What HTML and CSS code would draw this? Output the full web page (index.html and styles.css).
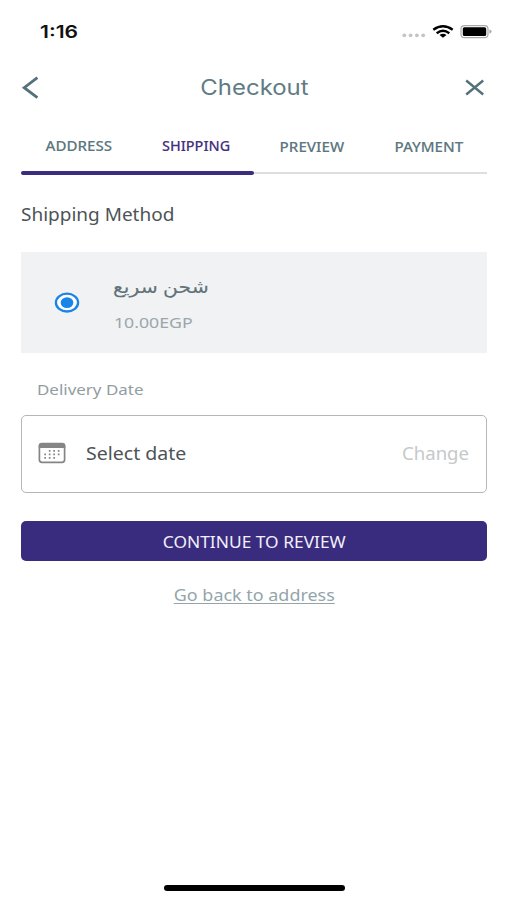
FILE: index.html
```html
<!DOCTYPE html>
<html lang="en">
<head>
<meta charset="utf-8">
<title>Checkout</title>
<link rel="stylesheet" href="styles.css">
</head>
<body>
<div class="screen">
  <div class="status">
    <span class="time wide">1:16</span>
    <svg class="status-icons" width="90" height="16" viewBox="0 0 90 16">
      <g fill="#c4c4c4"><circle cx="2.3" cy="10.3" r="1.9"/><circle cx="8.6" cy="10.3" r="1.9"/><circle cx="14.9" cy="10.3" r="1.9"/><circle cx="21.2" cy="10.3" r="1.9"/></g>
      <g fill="none" stroke="#000" stroke-width="2.4"><path d="M31.3 4.8Q41-2.2 50.7 4.8"/><path d="M34.7 8.2Q41 3.4 47.3 8.2"/></g>
      <path d="M37.5 9.9Q41 7.4 44.5 9.9L41 12.8Z"/>
      <rect x="59" y=".6" width="27" height="12" rx="3.4" fill="#fff" stroke="#aaa" stroke-width="1.2"/>
      <rect x="60.8" y="2.2" width="23.4" height="8.8" rx="1.6"/>
      <path d="M87.4 4.4Q89.6 5 89.6 6.6T87.4 8.8Z" fill="#aaa"/>
    </svg>
  </div>
  <header class="header">
    <svg class="chevron" width="18" height="24" viewBox="0 0 18 24" fill="none" stroke="#54717b" stroke-width="2.8"><path d="M16.4 1.7L3.2 11.7L16.4 21.7"/></svg>
    <h1 class="title wide">Checkout</h1>
    <svg class="close" width="20" height="18" viewBox="0 0 20 18" fill="none" stroke="#54717b" stroke-width="2.4"><path d="M1.2 1.5L18.2 15.5M18.2 1.5L1.2 15.5"/></svg>
  </header>
  <nav class="tabs">
    <span class="tab"><span class="wide t1">ADDRESS</span></span>
    <span class="tab active"><span class="wide t2">SHIPPING</span></span>
    <span class="tab low"><span class="wide t1">PREVIEW</span></span>
    <span class="tab low"><span class="wide t1">PAYMENT</span></span>
  </nav>
  <div class="track"><div class="progress"></div></div>
  <h2 class="section"><span class="wide left">Shipping Method</span></h2>
  <div class="method">
    <svg class="radio" width="26" height="22" viewBox="0 0 26 22"><ellipse cx="13" cy="11.6" rx="11.1" ry="8.9" fill="#fff" stroke="#1b84e7" stroke-width="2.3"/><ellipse cx="13" cy="11.6" rx="6.3" ry="5.4" fill="#1b84e7"/></svg>
    <div class="method-text">
      <div class="method-name" lang="ar"><span class="wide left">شحن سريع</span></div>
      <div class="price"><span class="wide left">10.00EGP</span></div>
    </div>
  </div>
  <div class="label"><span class="wide left">Delivery Date</span></div>
  <div class="date">
    <svg class="calendar" width="28" height="22" viewBox="0 0 28 22"><rect x="1.4" y="1.6" width="25.2" height="18.8" rx="2.6" fill="none" stroke="#858585" stroke-width="1.7"/><path d="M.8 6V3.5Q1 .9 4 .9H24Q27 .9 27.3 3.5V6Z" fill="#858585"/><g fill="none" stroke="#858585" stroke-width="1.6" stroke-dasharray="1.7 2.8"><path d="M10.8 8.9H22.4"/><path d="M6.3 12.4H22.4"/><path d="M6.3 15.9H18"/></g></svg>
    <span class="date-value"><span class="wide left">Select date</span></span>
    <span class="change"><span class="wide right">Change</span></span>
  </div>
  <button class="continue"><span class="wide">CONTINUE TO REVIEW</span></button>
  <a class="back"><span class="wide">Go back to address</span></a>
  <div class="home"></div>
</div>
</body>
</html>
```
FILE: styles.css
```css
* { box-sizing: border-box; }
body { margin: 0; background: #fff; }
.screen { width: 507px; height: 900px; padding: 0 20px 0 21px; display: flex; flex-direction: column; font-family: "Noto Sans", "DejaVu Sans", sans-serif; overflow: hidden; }
.wide { display: inline-block; white-space: nowrap; transform: scaleX(1.15); }
.left { transform-origin: left; }
.right { transform-origin: right; }
.status { height: 60px; padding: 21px 0 0 19px; display: flex; justify-content: space-between; }
.time { margin-top: 1px; font: 600 17px/20px Inter, sans-serif; color: #111; transform: scaleX(1.24); transform-origin: left; }
.status-icons { margin: 4px -5px 0 0; }
.header { height: 55px; display: flex; align-items: center; justify-content: space-between; }
.title { margin: 0 0 0 4px; font: 400 21px/28px Inter, sans-serif; color: #617b84; transform: scaleX(1.14); }
.close { margin-right: 2px; }
.tabs { height: 56px; display: grid; grid-template-columns: repeat(4, 1fr); padding-top: 21px; font-size: 14px; line-height: 20px; font-weight: 500; color: #5c7780; text-align: center; -webkit-text-stroke: .1px; }
.t1 { transform: scaleX(1.08); }
.t2 { transform: scaleX(1.03); }
.active { color: #42327f; }
.low { padding-top: 1px; }
.track { height: 4px; background: linear-gradient(#fff 1px, #dcdfe1 1px, #dcdfe1 3px, #fff 3px); }
.progress { width: 50%; height: 4px; border-radius: 2px; background: #3b2c80; }
.section { margin: 26px 0 0; height: 51px; font-size: 18px; line-height: 26px; font-weight: 400; color: #4d5356; }
.section .wide { transform: scaleX(1.055); }
.method { height: 101px; background: #f0f2f3; display: flex; padding-left: 33px; }
.radio { margin-top: 39px; margin-right: 33px; }
.method-name { margin-top: 20px; font-size: 18px; line-height: 28px; height: 38px; color: #627279; -webkit-text-stroke: .12px; }
.method-name .wide { transform: scaleX(1.13); }
.price { font-size: 15px; line-height: 24px; color: #9ba6ab; padding-left: 1px; }
.price .wide { transform: scaleX(1.18); }
.label { margin: 24px 0 0 16px; height: 38px; font-size: 15px; line-height: 24px; color: #929da2; }
.label .wide { transform: scaleX(1.13); }
.date { height: 78px; border: 1.5px solid #b3b7b8; border-radius: 5px; display: flex; align-items: center; padding: 0 17px 2px 16px; font-size: 18px; }
.date-value { margin-left: 20px; color: #4d5356; }
.date-value .wide { transform: scaleX(1.085); }
.change { margin-left: auto; color: #c6c9ca; }
.change .wide { transform: scaleX(1.03); }
.continue { margin-top: 28px; height: 40px; border: 0; border-radius: 5px; background: #392b7d; color: #f2f0fa; font: 400 16px/24px "Noto Sans", sans-serif; padding: 1px 0 0; }
.continue .wide { transform: scaleX(1.085); }
.back { margin-top: 22px; align-self: center; font-size: 17px; line-height: 24px; color: #94a5aa; }
.back .wide { text-decoration: underline; text-underline-offset: 2px; transform: scaleX(1.055); }
.home { width: 181px; height: 6px; border-radius: 3px; background: #000; margin: auto 0 9px 143px; }
```
